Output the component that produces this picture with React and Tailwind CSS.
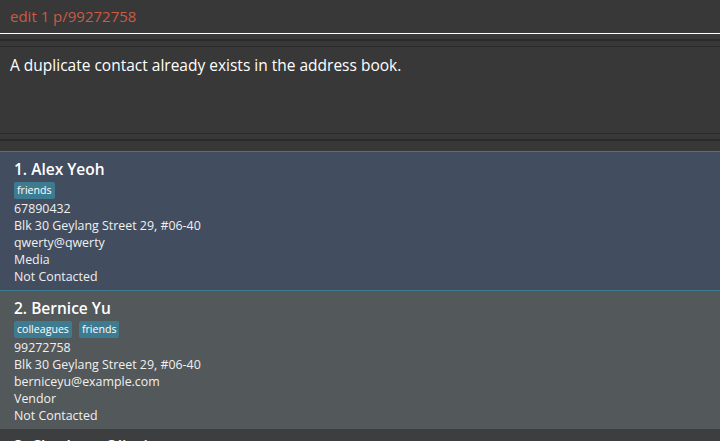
const people = [
  {
    name: "1. Alex Yeoh",
    tags: ["friends"],
    phone: "67890432",
    address: "Blk 30 Geylang Street 29, #06-40",
    email: "qwerty@qwerty",
    role: "Media",
    status: "Not Contacted",
    bg: "bg-[#424d5f]",
    border: "border-y border-[#3e7b91]",
  },
  {
    name: "2. Bernice Yu",
    tags: ["colleagues", "friends"],
    phone: "99272758",
    address: "Blk 30 Geylang Street 29, #06-40",
    email: "berniceyu@example.com",
    role: "Vendor",
    status: "Not Contacted",
    bg: "bg-[#53585a]",
    border: "",
  },
]

function PersonCard({ p }) {
  return (
    <div className={`${p.bg} ${p.border} pl-[14px] pt-[6px] pb-[5px] text-white`}>
      <div className="text-[15.5px] font-semibold leading-[22px]">{p.name}</div>
      <div className="flex gap-[7px] mt-[2px] mb-[1px]">
        {p.tags.map((t) => (
          <span
            key={t}
            className="bg-[#3e7b91] rounded-[2px] px-[3px] text-[10.6px] leading-[17px] text-white"
          >
            {t}
          </span>
        ))}
      </div>
      <div className="text-[12.4px] leading-[17px] text-[#f0f0f0]">
        <div>{p.phone}</div>
        <div>{p.address}</div>
        <div>{p.email}</div>
        <div>{p.role}</div>
        <div>{p.status}</div>
      </div>
    </div>
  )
}

export default function App() {
  return (
    <div
      className="w-[720px] h-[441px] overflow-hidden bg-[#383838]"
      style={{ fontFamily: '"Segoe UI", "Open Sans", "Noto Sans", sans-serif' }}
    >
      {/* command box */}
      <div className="h-[33px] pl-[10px] flex items-center text-[15px] text-[#cc5a44]">
        edit 1 p/99272758
      </div>
      <div className="h-[1px] bg-white" />
      <div className="h-[5px]" />
      <div className="h-[2px] bg-[#2a2a2a]" />
      <div className="h-[5px]" />
      <div className="h-[1px] bg-[#2a2a2a]" />

      {/* result display */}
      <div className="h-[86px] pl-[10px] pt-[7px] text-[15.5px] text-white">
        A duplicate contact already exists in the address book.
      </div>
      <div className="h-[1px] bg-[#2a2a2a]" />
      <div className="h-[5px]" />
      <div className="h-[2px] bg-[#2a2a2a]" />
      <div className="h-[10px]" />

      {/* person list */}
      <div>
        {people.map((p) => (
          <PersonCard key={p.name} p={p} />
        ))}
        <div className="bg-[#3c3e3f] h-[40px] pl-[14px] pt-[6px] text-[15.5px] font-semibold text-white">
          3. Charlotte Oliveiro
        </div>
      </div>
    </div>
  )
}
